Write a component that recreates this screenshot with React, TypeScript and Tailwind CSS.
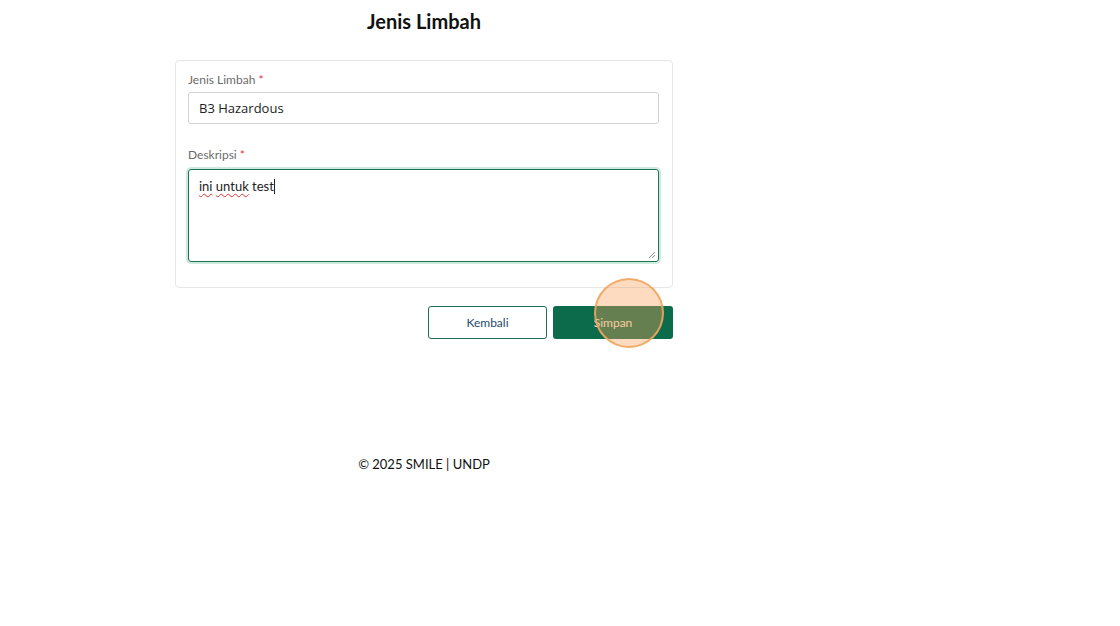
import React from 'react';

const App: React.FC = () => {
  return (
    <div className="min-h-[626px] w-[1120px] bg-white" style={{ fontFamily: 'Lato, "Noto Sans", sans-serif' }}>
      <div className="w-[848px] flex flex-col items-center pt-[9px]">
        <h1 className="text-[20px] leading-[24px] font-bold text-[#111]">Jenis Limbah</h1>

        <div className="w-[498px] mt-[27px]">
          {/* Form card */}
          <div className="border border-[#e6e6e6] rounded-[4px] pl-[12px] pr-[13px] pt-[11px] pb-[25px]">
            <label className="block text-[12px] leading-[16px] text-[#6b6b6b]">
              Jenis Limbah <span className="text-[#dc3545]">*</span>
            </label>
            <input
              defaultValue="B3 Hazardous"
              className="mt-[4px] w-full h-[32px] border border-[#d4d4d4] rounded-[3px] px-[10px] text-[13px] text-[#222] outline-none"
              style={{ fontFamily: '"Open Sans", "Noto Sans", sans-serif' }}
            />

            <label className="block mt-[23px] text-[12px] leading-[16px] text-[#6b6b6b]">
              Deskripsi <span className="text-[#dc3545]">*</span>
            </label>
            <div className="mt-[6px] h-[93px] border border-[#1f6f52] rounded-[3px] shadow-[0_0_0_2px_rgba(170,220,200,0.6)] px-[10px] pt-[7px] text-[13px] text-[#222] relative">
              <span className="underline decoration-wavy decoration-[#e03030] decoration-1 underline-offset-2">ini</span>{' '}
              <span className="underline decoration-wavy decoration-[#e03030] decoration-1 underline-offset-2">untuk</span> test
              <span className="inline-block w-px h-[15px] bg-[#222] align-middle -mt-[2px]"></span>
              <svg className="absolute right-[2px] bottom-[2px]" width="8" height="8" viewBox="0 0 8 8">
                <path d="M7 1L1 7M7 4L4 7" stroke="#888" strokeWidth="1" />
              </svg>
            </div>
          </div>

          {/* Actions */}
          <div className="flex justify-end gap-[6px] mt-[18px]">
            <button className="w-[119px] h-[33px] border border-[#1f6f52] rounded-[3px] text-[12px] text-[#2a4a6b] bg-white">
              Kembali
            </button>
            <div className="relative">
              <button className="w-[120px] h-[33px] rounded-[3px] text-[12px] text-[#f3e6d0] bg-[#0b6b4b]">
                Simpan
              </button>
              <div className="absolute left-[41px] top-[-28px] w-[70px] h-[70px] rounded-full bg-[rgba(250,160,90,0.38)] border-2 border-[rgba(240,165,95,0.9)] pointer-events-none"></div>
            </div>
          </div>
        </div>

        <div className="mt-[117px] text-[13px] leading-[16px] text-[#111]">© 2025 SMILE | UNDP</div>
      </div>
    </div>
  );
};

export default App;
